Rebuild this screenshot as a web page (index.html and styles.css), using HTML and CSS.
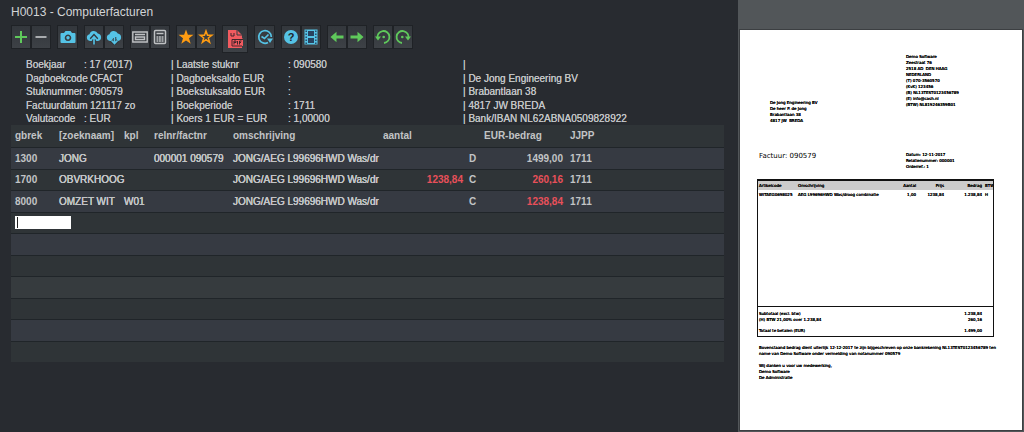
FILE: index.html
```html
<!DOCTYPE html>
<html lang="nl">
<head>
<meta charset="utf-8">
<title>H0013 - Computerfacturen</title>
<link rel="stylesheet" href="styles.css">
</head>
<body>
<main class="entry">
  <h1 class="title">H0013 - Computerfacturen</h1>
  <div class="toolbar">
    <div class="group">
      <button class="tool green" aria-label="Toevoegen"><svg viewBox="0 0 16 16"><path d="M8 2v12M2 8h12" stroke="currentColor" stroke-width="2"/></svg></button>
      <button class="tool grey" aria-label="Verwijderen"><svg viewBox="0 0 16 16"><path d="M2.500 8h11" stroke="currentColor" stroke-width="1.700"/></svg></button>
    </div>
    <div class="group">
      <button class="tool single blue" aria-label="Camera"><svg viewBox="0 0 16 16"><path fill="currentColor" fill-rule="evenodd" d="M1.500 4H4l1.500-2h5L12 4h2.500q1 0 1 1v8q0 1-1 1h-13q-1 0-1-1V5q0-1 1-1zM8 5.500a3.300 3.300 0 1 0 .01 0zM8 7a1.700 1.700 0 1 1-.01 0z"/></svg></button>
    </div>
    <div class="group">
      <button class="tool blue" aria-label="Uploaden"><svg viewBox="0 0 16 16"><path fill="currentColor" d="M4 12a3.400 3.400 0 0 1-.5-6.700A4.400 4.400 0 0 1 11.800 4.500 3.800 3.800 0 0 1 12 12z"/><path d="M8 15.500V8M5 10.500l3-3.300 3 3.300" fill="none" stroke="#33373c" stroke-width="3.500"/><path d="M8 15.500V8M5 11l3-3.300 3 3.300" fill="none" stroke="currentColor" stroke-width="1.600"/></svg></button>
      <button class="tool blue" aria-label="Downloaden"><svg viewBox="0 0 16 16"><path fill="currentColor" d="M4 12a3.400 3.400 0 0 1-.5-6.700A4.400 4.400 0 0 1 11.800 4.500 3.800 3.800 0 0 1 12 12z"/><path d="M8.500 8v6M5.500 11.500l3 3 3-3" fill="none" stroke="#33373c" stroke-width="3.500"/><path d="M5.500 10q.5-2 3-2v6M5.500 11.500l3 3 3-3" fill="none" stroke="currentColor" stroke-width="1.600"/></svg></button>
    </div>
    <div class="group">
      <button class="tool grey" aria-label="Kaart"><svg viewBox="0 0 16 16"><path d="M.8 3h14.400v10H.8zM3 5.500h10M3.500 8h9v2.500h-9z" fill="none" stroke="currentColor" stroke-width="1.400"/></svg></button>
      <button class="tool grey" aria-label="Rekenmachine"><svg viewBox="0 0 16 16"><rect x="2.500" y="1.500" width="11" height="13" rx="1" fill="none" stroke="currentColor" stroke-width="1.500"/><path d="M4.500 4.500h7M4.500 8h7M4.500 10h7M4.500 12h7" stroke="currentColor" stroke-width="1.500"/><path d="M6.500 7v6M9.300 7v6" stroke="#383c41" stroke-width=".6"/></svg></button>
    </div>
    <div class="group">
      <button class="tool orange" aria-label="Favoriet"><svg viewBox="0 0 16 16"><path fill="currentColor" d="M8 .5l1.900 5.300h5.600L11 9.200l1.700 5.600L8 11.500l-4.700 3.300L5 9.200.5 5.800h5.600z"/></svg></button>
      <button class="tool orange" aria-label="Favorieten"><svg viewBox="0 0 16 16"><path fill="none" stroke="currentColor" stroke-width="1.500" d="M8 2l1.500 4.300h4.300L10.300 9l1.300 4.300L8 10.700l-3.600 2.600L5.700 9 2.200 6.300h4.300z"/></svg></button>
    </div>
    <div class="group">
      <button class="tool pdf red" aria-label="PDF"><svg viewBox="0 0 18 20"><path fill="currentColor" d="M2 1h9l5 5v3.500h1V17h-1v2H2z"/><path d="M11 1v5h5" fill="none" stroke="#393d42"/><path d="M5 4v3h3V4M6 10.500h11M6 17h10M6 10.500V17M8 15.500V12h2v1.500H8M11.500 12v3.500M13.500 15.500V12h2M13.500 13.500h1.500" fill="none" stroke="#42252a" stroke-width="1"/></svg></button>
    </div>
    <div class="group">
      <button class="tool single blue" aria-label="Historie"><svg viewBox="0 0 16 16"><path d="M14.300 8A6.300 6.300 0 1 0 11 13.500" fill="none" stroke="currentColor" stroke-width="1.700"/><path fill="currentColor" d="M10 9.500h6l-3 4.500z"/><path d="M4.500 7.500l3 2 4-4" fill="none" stroke="currentColor" stroke-width="1.700"/></svg></button>
    </div>
    <div class="group">
      <button class="tool blue" aria-label="Help"><span class="help-mark">?</span></button>
      <button class="tool blue" aria-label="Film"><svg viewBox="0 0 16 16"><rect x="1.500" y=".5" width="13" height="15" fill="currentColor"/><path fill="#29435f" d="M5 2h6v5H5zM5 9h6v5H5z"/><path d="M3.200 1.500v14M12.800 1.500v14" stroke="#29435f" stroke-width="1.400" stroke-dasharray="1.500 1.500"/></svg></button>
    </div>
    <div class="group">
      <button class="tool green" aria-label="Vorige"><svg viewBox="0 0 16 16"><path fill="currentColor" d="M1.500 8L7.500 2.800v3.700h7v3h-7v3.700z"/></svg></button>
      <button class="tool green" aria-label="Volgende"><svg viewBox="0 0 16 16"><path fill="currentColor" d="M14.500 8L8.500 2.800v3.700h-7v3h7v3.700z"/></svg></button>
    </div>
    <div class="group">
      <button class="tool green" aria-label="Ongedaan maken"><svg viewBox="0 0 16 16"><path d="M2.500 9A6 6 0 1 1 9 14" fill="none" stroke="currentColor" stroke-width="1.800"/><path fill="currentColor" d="M0 7.500h6L3 11.500z"/><circle cx="8.700" cy="8" r="1.300" fill="currentColor"/></svg></button>
      <button class="tool green" aria-label="Opnieuw"><svg viewBox="0 0 16 16"><path d="M13.500 9A6 6 0 1 0 7 14" fill="none" stroke="currentColor" stroke-width="1.800"/><path fill="currentColor" d="M16 7.500h-6l3 4z"/><circle cx="7.300" cy="8" r="1.300" fill="currentColor"/></svg></button>
    </div>
  </div>

  <div class="info">
    <span>Boekjaar</span><span>: 17 (2017)</span><span>| Laatste stuknr</span><span>: 090580</span><span>|</span>
    <span>Dagboekcode</span><span class="bare">CFACT</span><span>| Dagboeksaldo EUR</span><span>:</span><span>| De Jong Engineering BV</span>
    <span>Stuknummer</span><span>: 090579</span><span>| Boekstuksaldo EUR</span><span>:</span><span>| Brabantlaan 38</span>
    <span>Factuurdatum</span><span class="bare">121117 zo</span><span>| Boekperiode</span><span>: 1711</span><span>| 4817 JW BREDA</span>
    <span>Valutacode</span><span>: EUR</span><span>| Koers 1 EUR = EUR</span><span>: 1,00000</span><span>| Bank/IBAN NL62ABNA0509828922</span>
  </div>

  <table class="lines">
    <colgroup><col class="c-gbrek"><col class="c-zoek"><col class="c-kpl"><col class="c-relnr"><col class="c-oms"><col class="c-aantal"><col class="c-dc"><col class="c-bedrag"><col></colgroup>
    <thead>
      <tr><th>gbrek</th><th>[zoeknaam]</th><th>kpl</th><th>relnr/factnr</th><th>omschrijving</th><th>aantal</th><th></th><th>EUR-bedrag</th><th class="period">JJPP</th></tr>
    </thead>
    <tbody>
      <tr><td>1300</td><td>JONG</td><td></td><td>000001 090579</td><td>JONG/AEG L99696HWD Was/dr</td><td></td><td class="dc">D</td><td class="num">1499,00</td><td class="period">1711</td></tr>
      <tr><td>1700</td><td>OBVRKHOOG</td><td></td><td></td><td>JONG/AEG L99696HWD Was/dr</td><td class="num neg">1238,84</td><td class="dc">C</td><td class="num neg">260,16</td><td class="period">1711</td></tr>
      <tr><td>8000</td><td>OMZET WIT</td><td>W01</td><td></td><td>JONG/AEG L99696HWD Was/dr</td><td></td><td class="dc">C</td><td class="num neg">1238,84</td><td class="period">1711</td></tr>
      <tr><td colspan="9"><input class="field" type="text" aria-label="gbrek"></td></tr>
      <tr><td colspan="9"></td></tr>
      <tr><td colspan="9"></td></tr>
      <tr class="soft"><td colspan="9"></td></tr>
      <tr><td colspan="9"></td></tr>
      <tr><td colspan="9"></td></tr>
      <tr><td colspan="9"></td></tr>
    </tbody>
  </table>
</main>

<aside class="preview">
  <article class="page">
    <address class="sender">Demo Software<br>Zeestraat 76<br>2518 AD&nbsp; DEN HAAG<br>NEDERLAND<br>(T) 070-3560570<br>(KvK) 123456<br>(B) NL13TEST0123456789<br>(E) info@cash.nl<br>(BTW) NL819246359B01</address>
    <address class="recipient">De Jong Engineering BV<br>De heer P. de Jong<br>Brabantlaan 38<br>4817 JW&nbsp; BREDA</address>
    <div class="meta">
      <h2 class="number">Factuur: 090579</h2>
      <p class="refs">Datum: 12-11-2017<br>Relatienummer: 000001<br>Orderref.: 1</p>
    </div>
    <div class="invoice">
      <table class="items">
        <colgroup><col class="i-code"><col><col class="i-qty"><col class="i-price"><col class="i-sum"><col class="i-vat"></colgroup>
        <thead><tr><th>Artikelcode</th><th>Omschrijving</th><th class="num">Aantal</th><th class="num">Prijs</th><th class="num">Bedrag</th><th>BTW</th></tr></thead>
        <tbody><tr><td>WITAEG0698025</td><td>AEG L99696HWD Was/droog combinatie</td><td class="num">1,00</td><td class="num">1238,84</td><td class="num">1.238,84</td><td>H</td></tr></tbody>
      </table>
      <div class="totals">
        <div class="total"><span>Subtotaal (excl. btw)</span><span>1.238,84</span></div>
        <div class="total"><span>(H) BTW 21,00% over 1.238,84</span><span>260,16</span></div>
        <div class="total grand"><span>Totaal te betalen (EUR)</span><span>1.499,00</span></div>
      </div>
    </div>
    <p class="note">Bovenstaand bedrag dient uiterlijk 12-12-2017 te zijn bijgeschreven op onze bankrekening NL13TEST0123456789 ten<br>name van Demo Software onder vermelding van notanummer 090579</p>
    <p class="note">Wij danken u voor uw medewerking,<br>Demo Software<br>De Administratie</p>
  </article>
</aside>
</body>
</html>
```

FILE: styles.css
```css
* { box-sizing: border-box; }
body {
  margin: 0;
  min-height: 100vh;
  display: flex;
  background: #282b30;
  color: #c2c4c6;
  font: 10px/13px "Liberation Sans", Arial, sans-serif;
}
.entry { flex: 1; min-width: 0; padding: 4px 14px 0 11px; }
.title { margin: 0; font-size: 12px; line-height: 16px; font-weight: 400; color: #d2d4d6; }

.toolbar { display: flex; align-items: flex-start; gap: 6px; height: 32px; margin-top: 5px; }
.group { display: flex; }
.tool {
  display: flex;
  align-items: center;
  justify-content: center;
  width: 20px;
  height: 24px;
  padding: 0;
  border: 1px solid #1f2226;
  background: linear-gradient(#33373c, #3d4146);
}
.tool svg { width: 16px; height: 16px; flex: none; }
.single { width: 21px; }
.pdf { width: 26px; height: 28px; }
.pdf svg { width: 18px; height: 20px; }
.green { color: #5fc95b; }
.grey { color: #bfc1c3; }
.blue { color: #55c3e6; }
.orange { color: #ff9c12; }
.red { color: #f25b60; }
.help-mark {
  width: 14px;
  border-radius: 50%;
  background: #55c3e6;
  color: #20262c;
  font: bold 11px/14px "Liberation Sans", Arial, sans-serif;
}

.info {
  display: grid;
  grid-template-columns: 58px 87px 117px 175px 1fr;
  grid-template-rows: 14px 13px 14px 13px 13px;
  margin-top: 1px;
  padding-left: 15px;
  white-space: nowrap;
  text-shadow: 0 0 0 currentColor;
}
.bare { padding-left: 6px; }

.lines { width: 100%; table-layout: fixed; border-collapse: collapse; white-space: nowrap; text-shadow: 0 0 0 currentColor, 0 0 0 currentColor; }
.lines th, .lines td { padding: 0; text-align: left; border-bottom: 1px solid #202529; }
.lines th { text-shadow: none; }
.lines th:first-child, .lines td:first-child { padding-left: 4px; }
.lines tr { height: 22px; background: #2f3437; }
.lines tbody tr:nth-child(even) { height: 21px; }
.lines tbody tr:nth-child(odd) { background: #363a42; }
.lines tbody tr.soft { background: #363b3e; }
.lines tr:last-child td { border-bottom: 0; }
.lines td.num, .lines td.period, .lines td.dc, .lines td:first-child { font-weight: 700; text-shadow: none; }
.lines .num { text-align: right; }
.lines .neg { color: #e8505a; }
.lines .dc { padding-left: 6px; }
.lines .period { padding-left: 7px; }
.c-gbrek { width: 48px; }
.c-zoek { width: 65px; }
.c-kpl { width: 30px; }
.c-relnr { width: 79px; }
.c-oms { width: 150px; }
.c-aantal { width: 80px; }
.c-dc { width: 21px; }
.c-bedrag { width: 79px; }
.field {
  display: block;
  width: 56px;
  height: 13px;
  padding: 0 2px;
  border: 1px solid #fff;
  background: linear-gradient(#222, #222) 1px 0 / 1px 100% no-repeat #fff;
  font: inherit;
}

.preview { width: 286px; padding: 30px 2px 2px; background: #525659; }
.page {
  min-height: 100%;
  padding: 24px 28px 0 17px;
  background: #fff;
  outline: 1px solid #3c3f42;
  color: #000;
  font: 4px/6px "DejaVu Sans", Verdana, sans-serif;
  white-space: nowrap;
  text-shadow: 0 0 0 #000, 0 0 0 #000;
}
.page p { margin: 0; }
.page address { font-style: normal; }
.sender { padding-left: 149px; height: 46px; }
.recipient { padding-left: 13px; }
.meta { display: grid; grid-template-columns: 149px 1fr; margin-top: 28px; }
.number { margin: 0; padding-left: 2px; font-size: 7px; line-height: 9px; font-weight: 400; text-shadow: none; }
.invoice { margin-top: 9px; border: 1px solid #111; border-top-width: 2px; }
.items { width: 100%; table-layout: fixed; border-collapse: collapse; }
.items th, .items td { padding: 0; text-align: left; font-weight: 400; }
.items th:first-child, .items td:first-child { padding-left: 1px; }
.items thead { background: #ccc; }
.items tr { height: 9px; }
.items .num { text-align: right; }
.items th:last-child, .items td:last-child { padding-left: 3px; }
.items th:last-child { overflow: hidden; }
.i-code { width: 40px; }
.i-qty { width: 20px; }
.i-price { width: 28px; }
.i-sum { width: 38px; }
.i-vat { width: 11px; }
.totals { margin-top: 107px; padding: 4px 11px 2px 1px; border-top: 1px solid #111; }
.total { display: flex; justify-content: space-between; }
.grand { margin-top: 5px; }
.note { padding-left: 2px; }
.invoice + .note { margin-top: 8px; }
.page .note + .note { margin-top: 6px; }
```
